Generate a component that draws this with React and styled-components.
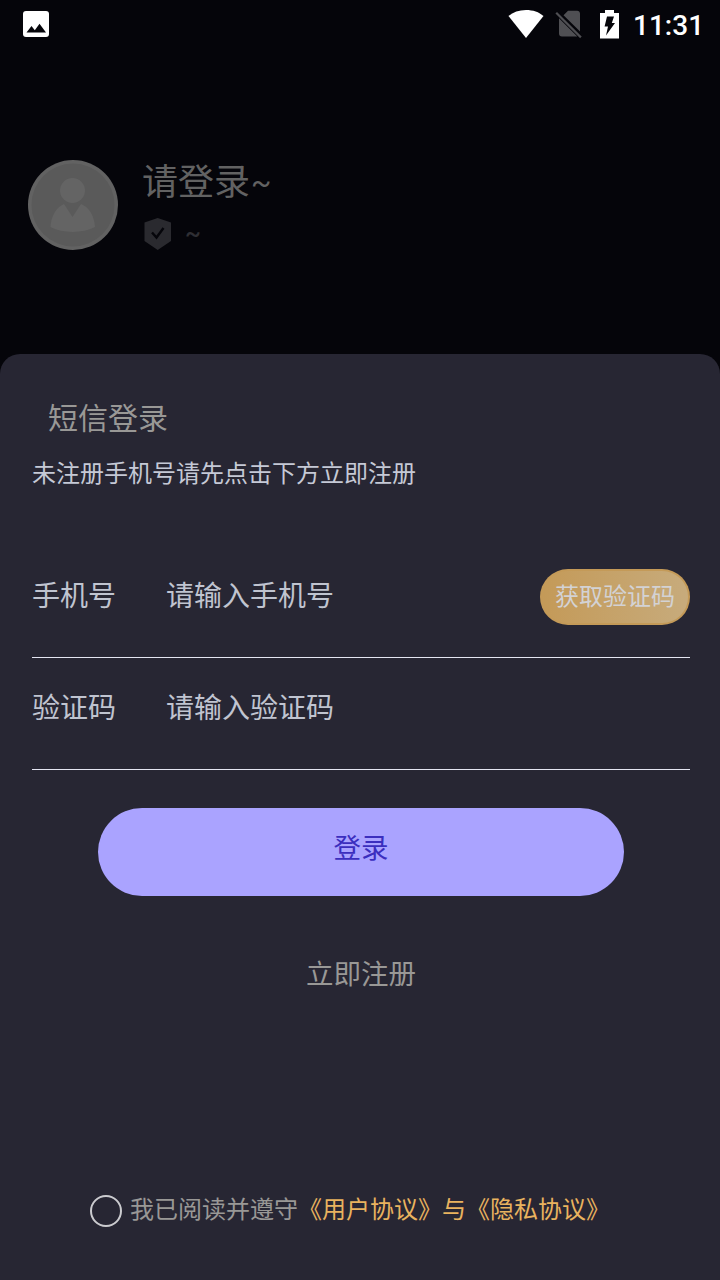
import React from "react";
import styled, { createGlobalStyle } from "styled-components";

const GlobalStyle = createGlobalStyle`
  *, *::before, *::after { box-sizing: border-box; }
  body {
    margin: 0;
    background: #05050a;
    font-family: Roboto, "Noto Sans CJK SC", sans-serif;
  }
  button, input { font-family: inherit; }
`;

const Screen = styled.div`
  width: 720px;
  height: 1280px;
  display: flex;
  flex-direction: column;
  overflow: hidden;
  background: #05050a;
`;

const StatusBar = styled.header`
  height: 48px;
  padding: 0 18px 0 23px;
  display: flex;
  align-items: center;
  justify-content: space-between;
`;

const StatusIcons = styled.div`
  display: flex;
  align-items: center;
`;

const Icon = styled.svg`
  display: block;
  flex: none;
  margin-left: ${(p) => p.$gap || 0}px;
`;

const Clock = styled.span`
  margin: 3px 0 0 14px;
  width: 69px;
  color: #fff;
  font-size: 28px;
  font-weight: 500;
  line-height: 32px;
  white-space: nowrap;
`;

const Profile = styled.section`
  height: 306px;
  padding: 112px 28px 0;
  display: flex;
  align-items: flex-start;
  gap: 24px;
`;

const ProfileText = styled.div`
  display: flex;
  flex-direction: column;
`;

const Name = styled.div`
  height: 48px;
  color: #626262;
  font-size: 36px;
  line-height: 46px;
`;

const NameTilde = styled.span`
  margin-left: 1px;
  font-size: 30px;
  line-height: 1;
  vertical-align: 2px;
`;

const Level = styled.div`
  margin: 10px 0 0 2px;
  display: flex;
  align-items: center;
  gap: 14px;
  color: #2f2f34;
  font-size: 24px;
  font-weight: 500;
  line-height: 32px;
`;

const Sheet = styled.main`
  flex: 1;
  padding: 43px 30px 0 32px;
  border-radius: 20px 20px 0 0;
  background: #272633;
  display: flex;
  flex-direction: column;
`;

const Title = styled.h1`
  margin: 0 0 0 16px;
  color: #999896;
  font-size: 30px;
  font-weight: 400;
  line-height: 44px;
`;

const Hint = styled.p`
  margin: 17px 0 54px;
  color: #c5c9d6;
  font-size: 24px;
  line-height: 32px;
`;

const Field = styled.label`
  height: ${(p) => p.$height}px;
  padding-top: ${(p) => p.$top}px;
  border-bottom: 1px solid #e4e5f2;
  display: flex;
  align-items: flex-start;
  color: #c0c4d0;
  font-size: 28px;
  line-height: 40px;
`;

const FieldLabel = styled.span`
  width: 134px;
`;

const FieldInput = styled.input`
  flex: 1;
  min-width: 0;
  height: 40px;
  padding: 0;
  border: 0;
  outline: 0;
  background: transparent;
  color: inherit;
  font-size: 28px;
  line-height: 40px;
  &::placeholder { color: #c0c4d0; opacity: 1; }
`;

const CodeButton = styled.button`
  width: 150px;
  height: 56px;
  margin-top: -8px;
  padding: 0;
  border: 2px solid transparent;
  border-radius: 28px;
  background:
    linear-gradient(90deg, #c49a58, #c7ab7c) padding-box,
    linear-gradient(#c49a58, #c49a58) border-box;
  color: #d3d2d4;
  font-size: 24px;
  line-height: 52px;
`;

const LoginButton = styled.button`
  width: 526px;
  height: 88px;
  margin: 38px 0 0 66px;
  padding: 0 0 6px;
  border: 0;
  border-radius: 44px;
  background: #aaa3ff;
  color: #3b2ebe;
  font-size: 27.5px;
  line-height: 40px;
`;

const RegisterLink = styled.a`
  margin-top: 59px;
  align-self: center;
  color: #999896;
  font-size: 27.5px;
  line-height: 40px;
`;

const Agreement = styled.div`
  margin: 200px 0 0 58px;
  display: flex;
  align-items: flex-start;
  color: #999896;
  font-size: 24px;
  line-height: 30px;
  white-space: nowrap;
`;

const Radio = styled.span`
  width: 32px;
  height: 32px;
  margin-right: 8px;
  border: 2px solid #cbcbcf;
  border-radius: 50%;
`;

const Terms = styled.span`
  color: #e9b35f;
`;

const PictureIcon = () => (
  <Icon width="26" height="26" viewBox="0 0 26 26">
    <rect width="26" height="26" rx="3" fill="#fff" />
    <path d="M3.500 21.500 8.500 15l3.300 4.200 4.700-6.500 6.500 8.800z" fill="#05050a" />
  </Icon>
);

const WifiIcon = () => (
  <Icon width="36" height="29" viewBox="0 0 36 29">
    <path d="M18 28.100.5 6.100C5 2 11 0 18 0s13 2 17.500 6.100z" fill="#fff" />
  </Icon>
);

const NoSimIcon = () => (
  <Icon $gap={11} width="28" height="29" viewBox="0 0 28 29">
    <path d="M8.500 5.200 13 .8h9.200c1.600 0 2.800 1.200 2.800 2.800v17.900zM4 8.300 22.300 26.600H7a3 3 0 0 1-3-3z" fill="#4f4f53" />
    <path d="m1.200 2.700 24.700 24.700" stroke="#4f4f53" strokeWidth="2.200" />
  </Icon>
);

const BatteryIcon = () => (
  <Icon $gap={17} width="19" height="29" viewBox="0 0 19 29">
    <path d="M5 0h9v3h5v25.500H0V3h5z" fill="#fff" />
    <path d="M7 6.500h7L11.800 13H15L6 25.500l2-9H4.600z" fill="#05050a" />
  </Icon>
);

const Avatar = () => (
  <Icon width="90" height="90" viewBox="0 0 90 90">
    <circle cx="45" cy="45" r="45" fill="#626262" />
    <circle cx="45" cy="45" r="41.500" fill="#5a5a5a" />
    <circle cx="44.500" cy="30.500" r="12.500" fill="#646464" />
    <path d="M36 44 44.500 57 53 44c8 3 13.500 12 14 23-13 6.500-32 6.500-44.500 0C23 56 28.500 47 36 44z" fill="#646464" />
  </Icon>
);

const ShieldIcon = () => (
  <Icon width="27" height="32" viewBox="0 0 27 32">
    <path d="M13.700 0 27 4.500V23L13.700 32 .5 23V4.500z" fill="#2a2a2f" />
    <path d="m8 14.500 4.500 5 7-9.500" fill="none" stroke="#05050a" strokeWidth="2.400" />
  </Icon>
);

export default function App() {
  return (
    <>
      <GlobalStyle />
      <Screen>
        <StatusBar>
          <PictureIcon />
          <StatusIcons>
            <WifiIcon />
            <NoSimIcon />
            <BatteryIcon />
            <Clock>11:31</Clock>
          </StatusIcons>
        </StatusBar>
        <Profile>
          <Avatar />
          <ProfileText>
            <Name>请登录<NameTilde>~</NameTilde></Name>
            <Level>
              <ShieldIcon />
              <span>~</span>
            </Level>
          </ProfileText>
        </Profile>
        <Sheet>
          <Title>短信登录</Title>
          <Hint>未注册手机号请先点击下方立即注册</Hint>
          <Field $height={114} $top={33}>
            <FieldLabel>手机号</FieldLabel>
            <FieldInput placeholder="请输入手机号" />
            <CodeButton type="button">获取验证码</CodeButton>
          </Field>
          <Field $height={112} $top={31}>
            <FieldLabel>验证码</FieldLabel>
            <FieldInput placeholder="请输入验证码" />
          </Field>
          <LoginButton type="button">登录</LoginButton>
          <RegisterLink>立即注册</RegisterLink>
          <Agreement>
            <Radio />
            <span>我已阅读并遵守</span>
            <Terms>《用户协议》与《隐私协议》</Terms>
          </Agreement>
        </Sheet>
      </Screen>
    </>
  );
}
